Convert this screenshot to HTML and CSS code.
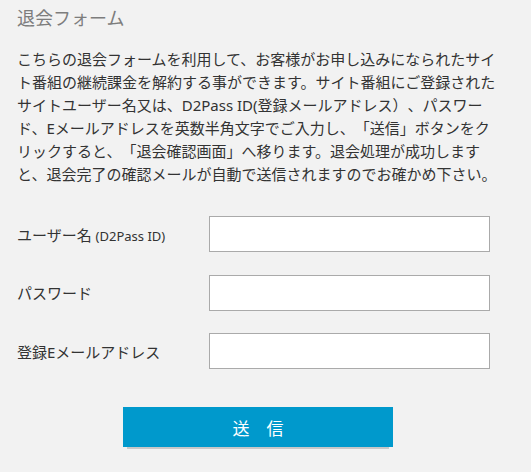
FILE: index.html
```html
<!DOCTYPE html>
<html lang="ja">
<head>
    <meta charset="UTF-8">
    <meta name="viewport" content="width=device-width, initial-scale=1.0">
    <title>退会フォーム</title>
    <link rel="stylesheet" href="styles.css">
</head>
<body>
    <div class="container">
        <h2 class="title">退会フォーム</h2>
        <p class="intro">こちらの退会フォームを利用して、お客様がお申し込みになられたサイト番組の継続課金を解約する事ができます。サイト番組にご登録されたサイトユーザー名又は、D2Pass ID(登録メールアドレス）、パスワード、Eメールアドレスを英数半角文字でご入力し、「送信」ボタンをクリックすると、「退会確認画面」へ移ります。退会処理が成功しますと、退会完了の確認メールが自動で送信されますのでお確かめ下さい。</p>

        <form id="quitForm" class="quit-form">
            <div class="row">
                <label for="username">ユーザー名 <span class="small">(D2Pass ID)</span></label>
                <input type="text" id="username">
            </div>
            <div class="row">
                <label for="password">パスワード</label>
                <input type="password" id="password">
            </div>
            <div class="row">
                <label for="email">登録Eメールアドレス</label>
                <input type="email" id="email">
            </div>
            <div class="btn-group">
                <button type="submit">送　信</button>
            </div>
        </form>
    </div>
</body>
</html>
```

FILE: styles.css
```css
body {
    font-family: "Noto Sans", "Noto Sans CJK JP", sans-serif;
    background-color: #f2f2f2;
    color: #333;
    margin: 0;
    text-spacing-trim: space-all;
}

.container {
    width: 482px;
    padding: 6px 17px;
}

.title {
    font-size: 18px;
    font-weight: normal;
    line-height: 24px;
    color: #7d7d7d;
    margin: 0;
}

.intro {
    font-size: 15px;
    line-height: 23px;
    margin: 18px 0 0;
    line-break: strict;
}

.quit-form {
    margin-top: 30px;
}

.row {
    display: flex;
    align-items: center;
    margin-bottom: 22.5px;
}

label {
    width: 192px;
    font-size: 15px;
}

.small {
    font-size: 13px;
}

input {
    width: 281px;
    height: 36px;
    box-sizing: border-box;
    border: 1px solid #aaa;
    background: white;
    margin: 0;
    padding: 4px 8px;
}

.btn-group {
    display: flex;
    justify-content: center;
    margin-top: 38px;
}

button {
    width: 270px;
    height: 40px;
    border: none;
    background-color: #0099cc;
    color: white;
    font-family: inherit;
    font-size: 17px;
    box-shadow: 0 6px 0 -4px #c8c8c8;
    cursor: pointer;
}
```
